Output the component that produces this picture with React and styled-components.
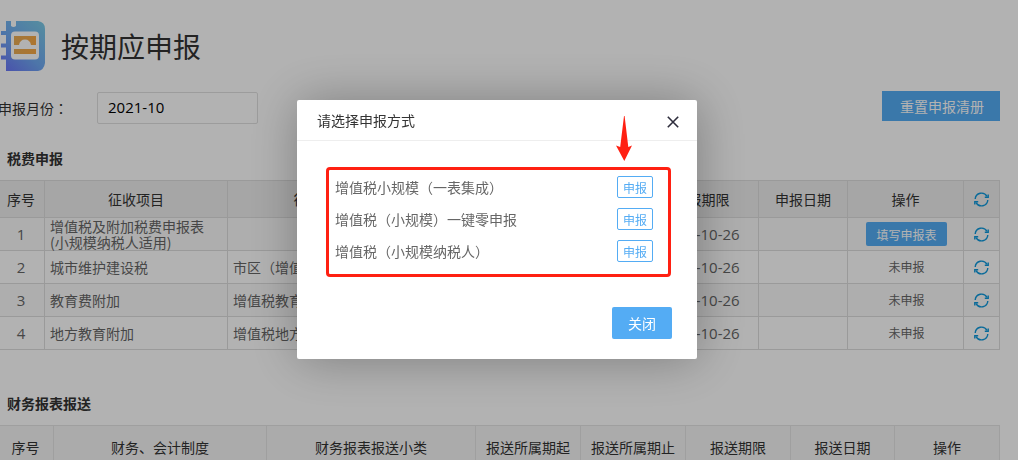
import React, { useState } from "react";
import styled, { createGlobalStyle } from "styled-components";

const taxColumns = [
    { key: "no", title: "序号", width: 45 },
    { key: "name", title: "征收项目", width: 183 },
    { key: "item", title: "征收品目", width: 188 },
    { key: "from", title: "", width: 114 },
    { key: "to", title: "", width: 115 },
    { key: "deadline", title: "申报期限", width: 114 },
    { key: "date", title: "申报日期", width: 89 },
    { key: "action", title: "操作", width: 116 },
];

const taxRows = [
    { id: 1, name: "增值税及附加税费申报表(小规模纳税人适用)", item: "", canFill: true },
    { id: 2, name: "城市维护建设税", item: "市区（增值税" },
    { id: 3, name: "教育费附加", item: "增值税教育费附加" },
    { id: 4, name: "地方教育附加", item: "增值税地方教育附加" },
];

const financeColumns = [
    { title: "序号", width: 54 },
    { title: "财务、会计制度", width: 213 },
    { title: "财务报表报送小类", width: 209 },
    { title: "报送所属期起", width: 105 },
    { title: "报送所属期止", width: 105 },
    { title: "报送期限", width: 105 },
    { title: "报送日期", width: 104 },
    { title: "操作", width: 105 },
];

const declareOptions = [
    "增值税小规模（一表集成）",
    "增值税（小规模）一键零申报",
    "增值税（小规模纳税人）",
];

function LogoIcon() {
    return (
        <svg width="46" height="50" viewBox="0 0 46 50" aria-hidden="true">
            <defs>
                <linearGradient id="book" x1="0.1" y1="1" x2="0.9" y2="0">
                    <stop offset="0" stopColor="#6a76f6" />
                    <stop offset="0.45" stopColor="#6fa9f2" />
                    <stop offset="1" stopColor="#7bc9e6" />
                </linearGradient>
                <linearGradient id="gold" x1="0" y1="0" x2="1" y2="0">
                    <stop offset="0" stopColor="#e9ac55" />
                    <stop offset="1" stopColor="#f8a844" />
                </linearGradient>
            </defs>
            <path
                fill="url(#book)"
                d="M6 0H11V5Q13.500 7 16 5V0H38Q45 1 45 8V42Q44 49 38 50H6V38.500H1V34.500H6V26.500H1V22.500H6V14H1V10H6Z"
            />
            <rect x="11" y="10.500" width="28" height="28" rx="4" fill="#fff" />
            <path fill="url(#gold)" d="M14 15H36V24H31Q30 18.500 25 18.500Q20 18.500 19 24H14Z" />
            <rect x="14" y="28" width="22" height="5" fill="url(#gold)" />
        </svg>
    );
}

function RefreshIcon() {
    return (
        <svg width="15" height="15" viewBox="0 0 15 15" fill="none" stroke="#0d98dc" strokeWidth="1.400" aria-hidden="true">
            <path d="M1.200 7A6.300 6.300 0 0 1 13 4.400" />
            <path d="M13.800 8A6.300 6.300 0 0 1 2 10.600" />
            <path d="M14.200 2.400V5.300H10.800" />
            <path d="M0.800 12.600V9.700H4.200" />
        </svg>
    );
}

function DeclareDialog({ onClose }) {
    return (
        <Shade>
            <Dialog role="dialog" aria-labelledby="dialog-title">
                <DialogHeader>
                    <DialogTitle id="dialog-title">请选择申报方式</DialogTitle>
                    <CloseIconButton onClick={onClose} aria-label="关闭">
                        <svg width="12" height="12" viewBox="0 0 12 12" stroke="#2e2d3c" strokeWidth="1.600">
                            <path d="M0.800 0.800L11.200 11.200M11.200 0.800L0.800 11.200" />
                        </svg>
                    </CloseIconButton>
                </DialogHeader>
                <DialogBody>
                    <OptionList>
                        {declareOptions.map((option) => (
                            <Option key={option}>
                                <span>{option}</span>
                                <OutlineButton>申报</OutlineButton>
                            </Option>
                        ))}
                    </OptionList>
                </DialogBody>
                <DialogFooter>
                    <PrimaryButton onClick={onClose}>关闭</PrimaryButton>
                </DialogFooter>
                <Pointer width="16" height="45" viewBox="0 0 16 45" aria-hidden="true">
                    <path fill="#ff2012" d="M8 0H8.600L12.300 31L16 29.500L8.300 45L0 29.500L4.200 31Z" />
                </Pointer>
            </Dialog>
        </Shade>
    );
}

function App() {
    const [month, setMonth] = useState("2021-10");
    const [dialogOpen, setDialogOpen] = useState(true);

    return (
        <Page>
            <GlobalStyle />
            <PageHeader>
                <LogoIcon />
                <PageTitle>按期应申报</PageTitle>
            </PageHeader>

            <FilterBar>
                <MonthLabel htmlFor="month">申报月份：</MonthLabel>
                <MonthInput id="month" type="text" value={month} onChange={(e) => setMonth(e.target.value)} />
                <ResetButton>重置申报清册</ResetButton>
            </FilterBar>

            <SectionTitle>税费申报</SectionTitle>
            <Table>
                <thead>
                    <tr>
                        {taxColumns.map((col) => (
                            <HeadCell key={col.key} $width={col.width}>{col.title}</HeadCell>
                        ))}
                        <HeadCell $width={36}>
                            <IconButton aria-label="刷新全部"><RefreshIcon /></IconButton>
                        </HeadCell>
                    </tr>
                </thead>
                <tbody>
                    {taxRows.map((row) => (
                        <BodyRow key={row.id}>
                            <NumberCell>{row.id}</NumberCell>
                            <TextCell>{row.name}</TextCell>
                            <TextCell $nowrap>{row.item}</TextCell>
                            <Cell />
                            <Cell />
                            <NumberCell>2021-10-26</NumberCell>
                            <Cell />
                            <StatusCell>
                                {row.canFill
                                    ? <FillButton onClick={() => setDialogOpen(true)}>填写申报表</FillButton>
                                    : "未申报"}
                            </StatusCell>
                            <Cell>
                                <IconButton aria-label="刷新"><RefreshIcon /></IconButton>
                            </Cell>
                        </BodyRow>
                    ))}
                </tbody>
            </Table>

            <SectionTitle $spaced>财务报表报送</SectionTitle>
            <Table>
                <thead>
                    <tr>
                        {financeColumns.map((col) => (
                            <HeadCell key={col.title} $width={col.width} $light>{col.title}</HeadCell>
                        ))}
                    </tr>
                </thead>
            </Table>

            {dialogOpen && <DeclareDialog onClose={() => setDialogOpen(false)} />}
        </Page>
    );
}

const GlobalStyle = createGlobalStyle`
  * {
    box-sizing: border-box;
  }
  body {
    margin: 0;
    overflow: hidden;
    background: #fff;
    color: #333;
    font: 14px/20px "Noto Sans CJK SC", sans-serif;
  }
  button, input {
    font-family: inherit;
    margin: 0;
  }
  button {
    padding: 0;
    border: 0;
    cursor: pointer;
  }
`;

const Page = styled.main`
  padding: 21px 18px 0 0;
`;

const PageHeader = styled.header`
  display: flex;
  align-items: center;
  gap: 15px;
  height: 50px;
`;

const PageTitle = styled.h1`
  margin: 0;
  font-size: 28px;
  font-weight: 400;
  line-height: 40px;
`;

const FilterBar = styled.div`
  display: flex;
  align-items: flex-end;
  margin-top: 20px;
`;

const MonthLabel = styled.label`
  width: 99px;
  margin-left: -2px;
  font-family: "Noto Sans CJK TC", sans-serif;
  line-height: 32px;
`;

const MonthInput = styled.input`
  width: 161px;
  height: 32px;
  padding: 0 10px 2px;
  border: 1px solid #e0e0e0;
  border-radius: 2px;
  background: #fff;
  color: #000;
  font: 15px "Open Sans", sans-serif;
`;

const ResetButton = styled.button`
  align-self: flex-start;
  height: 30px;
  margin: 0 0 3px auto;
  padding: 0 16px 0 18px;
  background: #54acf4;
  color: #fff;
  font-size: 14px;
`;

const SectionTitle = styled.h2`
  margin: ${(props) => (props.$spaced ? "43px" : "24px")} 0 12px;
  padding-left: 7px;
  font-size: 14px;
  font-weight: 700;
  line-height: 20px;
`;

const Table = styled.table`
  width: 100%;
  table-layout: fixed;
  border-collapse: separate;
  border-spacing: 0;
`;

const HeadCell = styled.th`
  width: ${(props) => props.$width / 10}%;
  height: ${(props) => (props.$light ? "44px" : "38px")};
  padding: 0;
  border: solid ${(props) => (props.$light ? "#e4e4e4" : "#ddd")};
  border-width: 1px 1px 1px 0;
  background: ${(props) => (props.$light ? "#f5f5f5" : "#eee")};
  font-weight: 400;
  white-space: nowrap;

  &:first-child {
    padding-right: 2px;
  }
`;

const BodyRow = styled.tr`
  &:nth-child(odd) {
    background: #f9f9f9;
  }
`;

const Cell = styled.td`
  height: 33px;
  padding: 0;
  border: solid #ddd;
  border-width: 0 1px 1px 0;
  color: #666;
  font-size: 14px;
  line-height: 16px;
  text-align: center;
`;

const NumberCell = styled(Cell)`
  padding-right: 2px;
  font-family: "Open Sans", sans-serif;
  font-size: 15px;
`;

const TextCell = styled(Cell)`
  padding: 0 12px 0 5px;
  text-align: left;
  white-space: ${(props) => (props.$nowrap ? "nowrap" : "normal")};
`;

const StatusCell = styled(Cell)`
  padding-left: 2px;
  font-size: 12px;
`;

const FillButton = styled.button`
  height: 24px;
  padding: 0 10px;
  border-radius: 2px;
  background: #54acf4;
  color: #fff;
  font-size: 12px;
`;

const IconButton = styled.button`
  display: block;
  width: 15px;
  height: 15px;
  margin: 0 auto;
  background: none;

  svg {
    display: block;
  }
`;

const Shade = styled.div`
  position: fixed;
  inset: 0;
  display: flex;
  justify-content: center;
  align-items: flex-start;
  padding: 100px 24px 0 0;
  background: rgba(0, 0, 0, 0.3);
`;

const Dialog = styled.section`
  position: relative;
  width: 400px;
  border-radius: 2px;
  background: #fff;
  box-shadow: 1px 1px 50px rgba(0, 0, 0, 0.3);
`;

const DialogHeader = styled.header`
  display: flex;
  justify-content: space-between;
  align-items: center;
  height: 41px;
  padding: 0 18px 0 20px;
  border-bottom: 1px solid #eee;
`;

const DialogTitle = styled.h3`
  margin: 0;
  font-size: 14px;
  font-weight: 400;
`;

const CloseIconButton = styled.button`
  display: flex;
  margin-top: 3px;
  background: none;
`;

const DialogBody = styled.div`
  padding: 26px 26px 30px 29px;
`;

const OptionList = styled.ul`
  margin: 0;
  padding: 1px 15px 7px 6px;
  border: 3px solid #ff2012;
  border-radius: 4px;
  list-style: none;
`;

const Option = styled.li`
  display: flex;
  justify-content: space-between;
  align-items: center;
  height: 32px;
  color: #666;
`;

const OutlineButton = styled.button`
  height: 22px;
  padding: 0 5px;
  border: 1px solid #54acf4;
  border-radius: 2px;
  background: #fff;
  color: #54acf4;
  font-size: 12px;
`;

const DialogFooter = styled.footer`
  display: flex;
  justify-content: flex-end;
  padding: 0 25px 20px;
`;

const PrimaryButton = styled.button`
  height: 32px;
  padding: 0 16px;
  border-radius: 2px;
  background: #54acf4;
  color: #fff;
  font-size: 14px;
`;

/* red arrow hanging over the dialog, above the first button */
const Pointer = styled.svg`
  position: absolute;
  top: 16px;
  right: 65px;
`;

export default App;
